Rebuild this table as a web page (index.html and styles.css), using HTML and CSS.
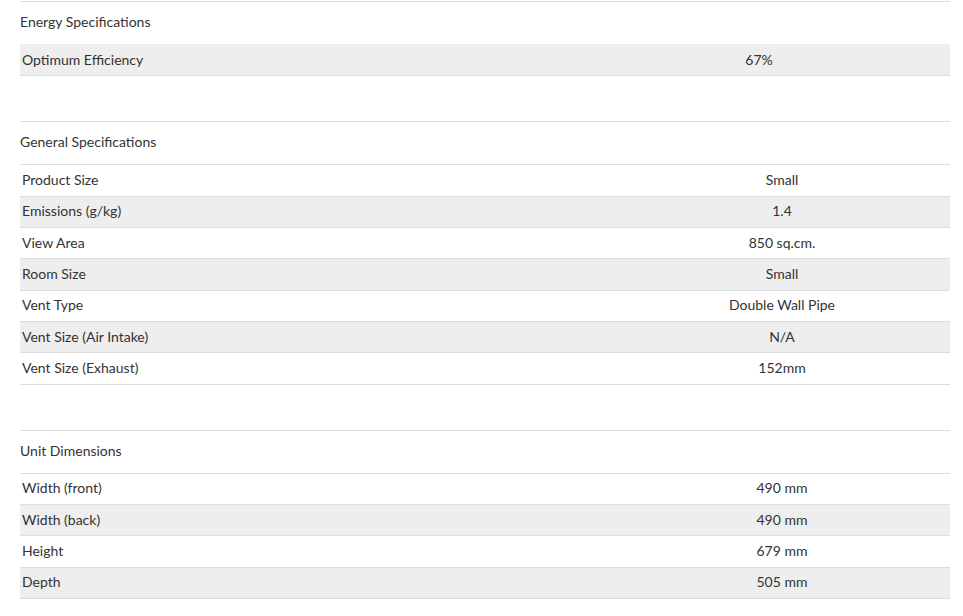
FILE: index.html
```html
<!DOCTYPE html>
<html>
<head>
<meta charset="utf-8">
<link rel="stylesheet" href="styles.css">
</head>
<body>
<div class="specs">
  <section class="group">
    <h3 class="group-title first">Energy Specifications</h3>
    <table class="spec-table energy">
      <tr class="shade"><td class="label">Optimum Efficiency</td><td class="value">67%</td></tr>
    </table>
  </section>
  <section class="group">
    <h3 class="group-title">General Specifications</h3>
    <table class="spec-table">
      <tr><td class="label">Product Size</td><td class="value">Small</td></tr>
      <tr class="shade"><td class="label">Emissions (g/kg)</td><td class="value">1.4</td></tr>
      <tr><td class="label">View Area</td><td class="value">850 sq.cm.</td></tr>
      <tr class="shade"><td class="label">Room Size</td><td class="value">Small</td></tr>
      <tr><td class="label">Vent Type</td><td class="value">Double Wall Pipe</td></tr>
      <tr class="shade"><td class="label">Vent Size (Air Intake)</td><td class="value">N/A</td></tr>
      <tr><td class="label">Vent Size (Exhaust)</td><td class="value">152mm</td></tr>
    </table>
  </section>
  <section class="group">
    <h3 class="group-title">Unit Dimensions</h3>
    <table class="spec-table">
      <tr><td class="label">Width (front)</td><td class="value">490 mm</td></tr>
      <tr class="shade"><td class="label">Width (back)</td><td class="value">490 mm</td></tr>
      <tr><td class="label">Height</td><td class="value">679 mm</td></tr>
      <tr class="shade"><td class="label">Depth</td><td class="value">505 mm</td></tr>
    </table>
  </section>
</div>
</body>
</html>
```
FILE: styles.css
```css
html, body {
  margin: 0;
  padding: 0;
  background: #fff;
}
body {
  font-family: Lato, "Open Sans", sans-serif;
  font-size: 14px;
  color: #333;
}
.specs {
  width: 930px;
  margin-left: 20px;
  padding-top: 1px;
}
.group {
  margin-bottom: 45px;
}
.group-title {
  margin: 0;
  font-size: 14px;
  font-weight: 400;
  line-height: 19px;
  padding: 10px 0 13px;
  border-top: 1px solid #ddd;
  border-bottom: 1px solid #ddd;
}
.group-title.first {
  border-bottom-color: #eee;
}
.spec-table {
  width: 100%;
  border-collapse: collapse;
}
.spec-table td {
  padding: 4px 2px 6px;
  height: 20.33px;
  line-height: 19px;
  border-bottom: 1px solid #ddd;
  box-sizing: content-box;
}
.spec-table tr.shade td {
  background: #eee;
}
.spec-table .value {
  text-align: center;
  width: 332px;
}
.energy .value {
  width: 378px;
}
```
